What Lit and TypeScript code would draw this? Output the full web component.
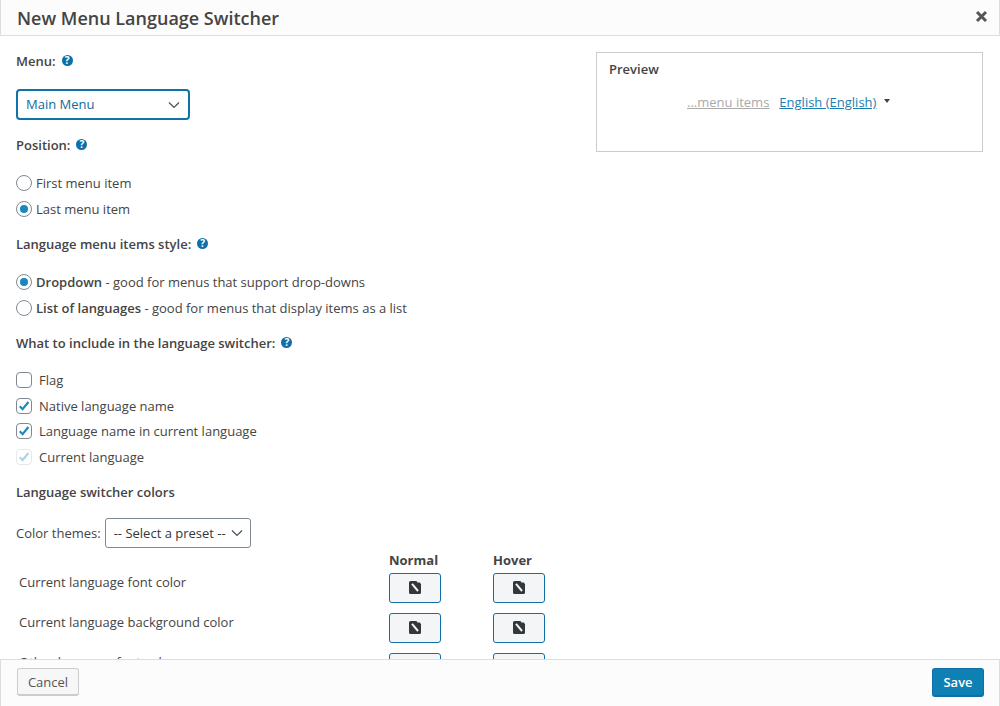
import { LitElement, html, css, svg } from "lit";
import { customElement } from "lit/decorators.js";

const chevron = svg`<svg class="chev" width="14" height="14" viewBox="0 0 14 14"><path d="M2 4.5 L7 9.5 L12 4.5" fill="none" stroke="#4a4f54" stroke-width="1.2"/></svg>`;
const tick = svg`<svg width="14" height="14" viewBox="0 0 14 14"><path d="M2.8 7.2 L5.6 10.2 L11.4 3" fill="none" stroke="currentColor" stroke-width="2.1"/></svg>`;
const picker = svg`<svg width="14" height="15" viewBox="0 0 14 15"><path d="M2.5 1H8.4L10 3 11 2 13 4V12.5A1.5 1.5 0 0 1 11.5 14H2.5A1.5 1.5 0 0 1 1 12.5V2.5A1.5 1.5 0 0 1 2.5 1Z" fill="#32373c"/><path d="M4 3.8 L10 11" stroke="#f3f5f6" stroke-width="2" fill="none"/></svg>`;

@customElement("app-root")
export class AppRoot extends LitElement {
  static styles = css`
    :host { display: flex; flex-direction: column; width: 1000px; height: 706px; overflow: hidden; background: #fff;
      font-family: "Open Sans", sans-serif; font-size: 13px; line-height: 19px; color: #444; box-sizing: border-box; }
    * { box-sizing: border-box; }
    header { flex: none; height: 36px; background: #fcfcfc; border: 1px solid #ddd; border-top: 0; display: flex; align-items: center;
      justify-content: space-between; padding: 0 11px 0 16px; }
    h1 { margin: 0; font-size: 18px; font-weight: 600; line-height: 34px; color: #444; }
    .close { display: flex; margin-top: -2px; }
    main { flex: 1; min-height: 0; overflow: hidden; display: grid; grid-template-columns: minmax(0, 1fr) 387px; column-gap: 16px; padding: 16px 17px 0 16px; align-items: start; }
    .left { display: flex; flex-direction: column; }
    .lab { font-weight: 600; display: flex; gap: 6px; height: 19px; align-items: center; }
    .help { width: 11px; height: 11px; border-radius: 50%; background: #0f6fa6; color: #fff; font-size: 10px; font-weight: 700; line-height: 11px;
      text-align: center; margin-top: -3px; flex: none; }
    .sel { display: flex; align-items: center; justify-content: space-between; background: #fff; height: 31px; width: 174px; margin-top: 18px; padding: 0 7px 0 8px;
      border: 2px solid #0f73a8; border-radius: 4px; color: #0f6b9c; }
    .row { display: flex; align-items: center; height: 26px; gap: 4px; }
    .checks { margin-top: 14px; display: grid; grid-template-rows: 26px 26px 24px 28px; }
    .checks .row { height: auto; }
    .row b { font-weight: 600; }
    .radio { width: 16px; height: 16px; border: 1px solid #7e8993; border-radius: 50%; background: #fff; display: flex; align-items: center; justify-content: center; flex: none; }
    .radio i { width: 8px; height: 8px; border-radius: 50%; background: #1a87bd; }
    .check { width: 16px; height: 16px; border: 1px solid #7e8993; border-radius: 4px; background: #fff; display: flex; align-items: center; justify-content: center; color: #1a87bd; flex: none; margin-right: 3px; }
    .check.dis { border-color: #e6e8ea; color: #a9d3e6; }
    .themes { display: flex; align-items: center; height: 30px; gap: 4px; margin-top: 16px; }
    .themes span { padding-top: 2px; }
    .sel2 { display: flex; align-items: center; height: 30px; width: 146px; padding: 2px 6px 0 8px; justify-content: space-between; border: 1px solid #7e8993; border-radius: 3px; background: #fff; color: #32373c; }
    .sel2 svg { margin-top: -2px; }
    .grid { display: grid; grid-template-columns: 370px 104px 52px; grid-template-rows: 24px; grid-auto-rows: 40px; padding-left: 3px; margin-top: 1px; }
    .grid .h { font-weight: 700; height: 22px; line-height: 22px; }
    .hdr { display: contents; }
    .swatch { width: 52px; height: 30px; border: 1px solid #0f6fa6; border-radius: 3px; background: #f3f5f6; display: flex; align-items: center; justify-content: center; }
    .preview { border: 1px solid #ccc; height: 100px; padding: 7px 12px; }
    .preview h3 { margin: 0; font-size: 13px; font-weight: 600; line-height: 19px; }
    .links { display: flex; margin-top: 14px; padding-left: 78px; align-items: center; }
    .links a.m { color: #aaa; text-decoration: underline; }
    .links a.e { color: #1a7fb0; text-decoration: underline; margin-left: 10px; }
    .caret { width: 0; height: 0; border: 3px solid transparent; border-top: 4px solid #444; border-bottom: 0; margin: -3px 0 0 8px; }
    footer { flex: none; height: 47px; background: #fcfcfc; border: 1px solid #ddd; border-bottom: 0; display: flex; justify-content: space-between; align-items: flex-start; padding: 8px 15px 0 16px; }
    .cancel { width: 62px; height: 28px; padding-top: 1px; background: #f7f7f7; border: 1px solid #ccc; border-bottom-width: 2px; border-radius: 3px; color: #555; display: flex; align-items: center; justify-content: center; }
    .save { width: 52px; height: 29px; background: #0f80b3; border: 1px solid #0f6fa6; border-bottom-width: 2px; border-radius: 3px; color: #fff; font-weight: 600; display: flex; align-items: center; justify-content: center; }
  `;

  private help() { return html`<span class="help">?</span>`; }
  private radio(on: boolean, body: unknown) {
    return html`<div class="row"><span class="radio">${on ? html`<i></i>` : ""}</span><span>${body}</span></div>`;
  }
  private check(on: boolean, dis: boolean, text: string) {
    return html`<div class="row"><span class="check ${dis ? "dis" : ""}">${on ? tick : ""}</span><span>${text}</span></div>`;
  }
  private color(label: string) {
    return html`<div>${label}</div><div class="swatch">${picker}</div><div class="swatch">${picker}</div>`;
  }

  render() {
    return html`
      <header>
        <h1>New Menu Language Switcher</h1>
        <span class="close"><svg width="13" height="13" viewBox="0 0 13 13"><path d="M2 2 L11 11 M11 2 L2 11" stroke="#555" stroke-width="3"/></svg></span>
      </header>
      <main>
        <div class="left">
          <div class="lab">Menu: ${this.help()}</div>
          <div class="sel">Main Menu ${chevron}</div>
          <div class="lab" style="margin-top:16px">Position: ${this.help()}</div>
          <div style="margin-top:15px">
            ${this.radio(false, "First menu item")}
            ${this.radio(true, "Last menu item")}
          </div>
          <div class="lab" style="margin-top:13px">Language menu items style: ${this.help()}</div>
          <div style="margin-top:15px">
            ${this.radio(true, html`<b>Dropdown</b> - good for menus that support drop-downs`)}
            ${this.radio(false, html`<b>List of languages</b> - good for menus that display items as a list`)}
          </div>
          <div class="lab" style="margin-top:13px">What to include in the language switcher: ${this.help()}</div>
          <div class="checks">
            ${this.check(false, false, "Flag")}
            ${this.check(true, false, "Native language name")}
            ${this.check(true, false, "Language name in current language")}
            ${this.check(true, true, "Current language")}
          </div>
          <div class="lab" style="margin-top:11.7px">Language switcher colors</div>
          <div class="themes"><span>Color themes:</span> <div class="sel2">-- Select a preset -- ${chevron}</div></div>
          <div class="grid">
            <div class="hdr"><div></div><div class="h">Normal</div><div class="h">Hover</div></div>
            ${this.color("Current language font color")}
            ${this.color("Current language background color")}
            ${this.color("Other language font color")}
          </div>
        </div>
        <section class="preview">
          <h3>Preview</h3>
          <div class="links"><a class="m">...menu items</a><a class="e">English (English)</a><span class="caret"></span></div>
        </section>
      </main>
      <footer>
        <div class="cancel">Cancel</div>
        <div class="save">Save</div>
      </footer>
    `;
  }
}
